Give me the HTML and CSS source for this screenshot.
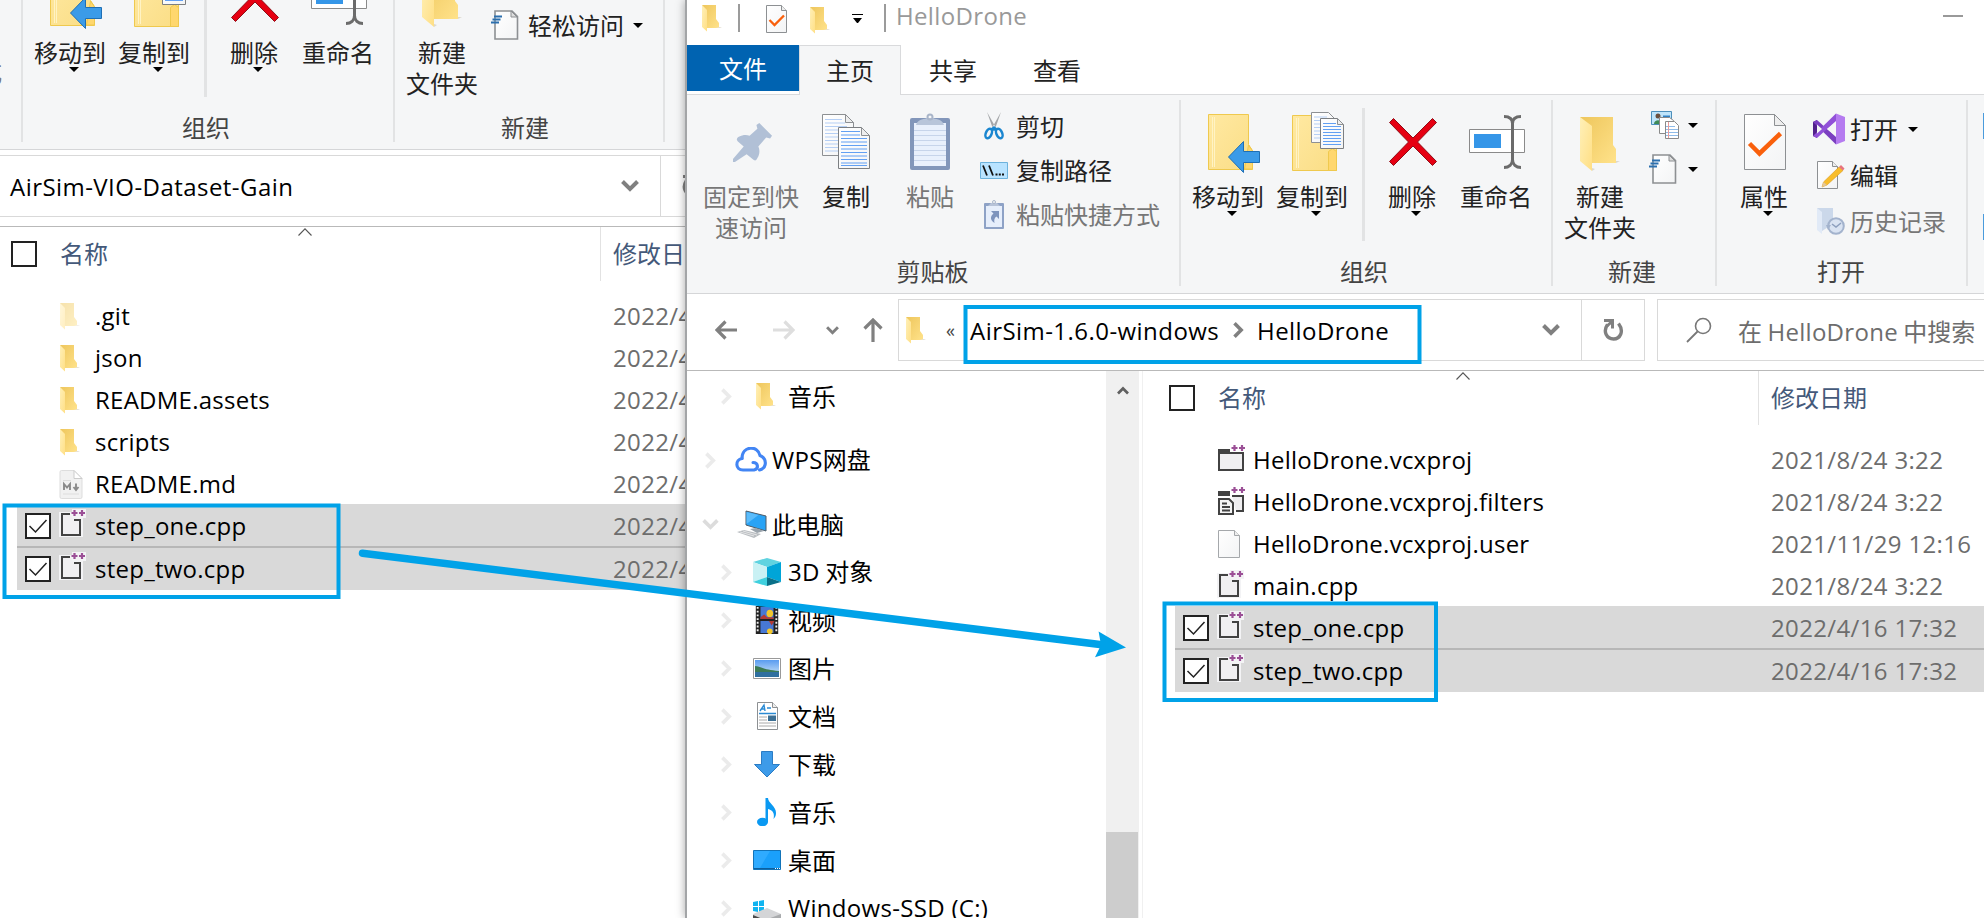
FILE: index.html
```html
<!DOCTYPE html>
<html lang="zh-CN">
<head>
<meta charset="utf-8">
<title>HelloDrone</title>
<link rel="stylesheet" href="styles.css">
</head>
<body>
<svg class="defs" width="0" height="0">
  <defs>
    <linearGradient id="gFold" x1="0" x2="1" y1="0" y2="1"><stop offset="0" stop-color="#eec65c"/><stop offset="1" stop-color="#ffe28a"/></linearGradient>
    <linearGradient id="gFlap" x1="0" x2="1" y1="0" y2="1"><stop offset="0" stop-color="#fff0b8"/><stop offset="1" stop-color="#ffdf85"/></linearGradient>
    <linearGradient id="gBook" x1="0" x2="1" y1="0" y2="1"><stop offset="0" stop-color="#ffe9a2"/><stop offset="1" stop-color="#fadd85"/></linearGradient>
    <linearGradient id="gPage" x1="0" x2="1" y1="0" y2="1"><stop offset="0" stop-color="#fff"/><stop offset="1" stop-color="#f3f4f5"/></linearGradient>
    <linearGradient id="gSky" x1="0" x2="0" y1="0" y2="1"><stop offset="0" stop-color="#5a9cf0"/><stop offset="1" stop-color="#d8ecf8"/></linearGradient>
    <symbol id="folder" viewBox="0 0 20 28"><path d="M0 1h14v14l3 4v5H5z" fill="url(#gFold)"/><path d="M0 1l5 5v21.500L0 23z" fill="url(#gFlap)"/><path d="M14 24h4l2-1h-3z" fill="#e6e1d5"/></symbol>
    <symbol id="folderBig" viewBox="0 0 40 56"><path d="M0 1h33v28l3 4v14H10z" fill="url(#gFold)"/><path d="M0 1l12 9v45L0 45z" fill="url(#gFlap)"/><path d="M36 47l4-2-4 0zM12 55l3-2-3-1z" fill="#dcd8ce"/></symbol>
    <symbol id="pin" viewBox="0 0 42 42"><path d="M28 1l13 13-2 3-4-1-8 9c2 4 1 9-1 12-1 3-3 3-5 1l-6-5L3 41H1v-3l11-13-6-5c-2-2-1-4 1-5 4-2 8-2 11-1l8-7-1-4z" fill="#b1c0d6"/></symbol>
    <symbol id="copy" viewBox="0 0 48 56"><path d="M.5.500h23l8 8v33H.500z" fill="url(#gPage)" stroke="#8d9093"/><path d="M3 5.500h17M3 9h20M3 12.500h22M3 16h13M3 19.500h13M3 23h13M3 26.500h13M3 30h13M3 33.500h13M3 37h13" stroke="#b5cff5"/><path d="M23.500.5v8h8z" fill="#eee" stroke="#8d9093"/><path d="M16.500 13.500h23l8 8v33h-31z" fill="url(#gPage)" stroke="#7c7f82"/><path d="M39.500 13.500v8h8z" fill="#eee" stroke="#8d9093"/><path d="M19 17.500h19M19 21h19M19 24.500h26M19 28h26M19 31.500h26M19 35h26M19 38.500h26M19 42h26M19 45.500h26M19 49h26M19 51.500h26" stroke="#62a0f3" stroke-width="1.200"/></symbol>
    <symbol id="paste" viewBox="0 0 40 58"><rect y="5" width="40" height="52" rx="2" fill="#8296ba"/><path d="M4 10h32v43H4z" fill="#e9f0fc"/><path d="M4 17.500h32M4 22.500h32M4 27.500h32M4 32.500h32M4 37.500h32M4 42.500h32M4 47.500h32" stroke="#c7d4ea"/><path d="M6 12c2-6 6-5 11-7h6c5 2 9 1 11 7z" fill="#b8c5da"/><circle cx="20" cy="4" r="2.500" fill="none" stroke="#a9b5c9" stroke-width="2"/></symbol>
    <symbol id="cut" viewBox="0 0 20 28"><path d="M3 0l9 16-3 1zM17 0L8 16l3 1z" fill="#a4a6a9"/><g fill="none" stroke="#1a86d0" stroke-width="2.500"><ellipse cx="4.700" cy="21.500" rx="2.900" ry="5" transform="rotate(22 4.700 21.500)"/><ellipse cx="15.300" cy="21.500" rx="2.900" ry="5" transform="rotate(-22 15.300 21.500)"/></g><path d="M6 17l4-3 4 3-4 2z" fill="#1a86d0"/></symbol>
    <symbol id="path" viewBox="0 0 28 17"><path d="M.5.500h27v16H.500z" fill="#b9e3ff" stroke="#6db2dc"/><path d="M3 3.500l4 10M9 3.500l4 10" stroke="#111" stroke-width="1.800"/><path d="M15.500 12.500h2M18.800 12.500h2M22 12.500h2" stroke="#111" stroke-width="2"/></symbol>
    <symbol id="pasteLink" viewBox="0 0 20 29"><rect y="3" width="20" height="26" rx="1" fill="#8ea2c6"/><path d="M2 6h16v21H2z" fill="#e6eefb"/><path d="M4 6l3-3h6l3 3z" fill="#b7c3d8"/><circle cx="10" cy="2" r="1.500" fill="none" stroke="#a9b5c9"/><path d="M7 11h8v8l-2.500-2.500c-2.500 1.500-2.500 4-2 6.500-5-3-4-7-1-9.500z" fill="#7e94bd"/></symbol>
    <symbol id="moveTo" viewBox="0 0 54 60"><path d="M2.500 1.500h40v30l4 6v19h-44z" fill="url(#gBook)" stroke="#efc94e"/><path d="M6.500 4v50M8.500 4v50" stroke="#fff3c4"/><path d="M42.500 32l4 6v18h-8z" fill="#ffd76e" stroke="#efc94e"/><path d="M22.500 44L37.500 28.500v10h16v11h-16v10z" fill="#3b9be8" stroke="#1f6fb4"/></symbol>
    <symbol id="copyTo" viewBox="0 0 54 60"><path d="M2.500 4.500h36v30h8v25h-44z" fill="url(#gBook)" stroke="#efc94e"/><path d="M6.500 7v50M8.500 7v50" stroke="#fff3c4"/><path d="M38.500 59.500v-19l4-3 4 3v19z" fill="#ffd76e" stroke="#efc94e"/><path d="M21.500 1.500h17l6 6v24h-23z" fill="url(#gPage)" stroke="#8d9093"/><path d="M24 6h13M24 9.500h6M24 13h6M24 16.500h6M24 20h6M24 23.500h6M24 27h6" stroke="#b5cff5"/><path d="M30.500 7.500h17l6 6v24h-23z" fill="url(#gPage)" stroke="#7c7f82"/><path d="M47.500 7.500v6h6z" fill="#eee" stroke="#8d9093"/><path d="M33 12.500h13M33 15.500h18M33 18.500h18M33 21.500h18M33 24.500h18M33 27.500h18M33 30.500h18M33 33.500h18" stroke="#62a0f3"/></symbol>
    <symbol id="delete" viewBox="0 0 48 48"><path d="M.5 4.500l4-4L24 20 43.500.500l4 4L28.500 24l19 19.500-4 4L24 28 4.500 47.500l-4-4L19.500 24z" fill="#e60012" stroke="#8f0f18"/></symbol>
    <symbol id="rename" viewBox="0 0 56 54"><path d="M.5 14.500h55v23H.500z" fill="#fff" stroke="#8a8a8a"/><path d="M5 19h27v14H5z" fill="#3596e8"/><path d="M35 1.500c5 0 8.500 2 8.500 7v36c0 5-3.500 8-8.500 8M52 1.500c-5 0-8.500 2-8.500 7v36c0 5 3.500 8 8.500 8" fill="none" stroke="#6b6b6b" stroke-width="3"/></symbol>
    <symbol id="newItem" viewBox="0 0 28 28"><path d="M.5.500h20v13H.500z" fill="#bfe4fa" stroke="#4c8fbb"/><circle cx="7" cy="5" r="2.500" fill="#6b4f3d"/><path d="M3 13c0-5 8-5 8 0z" fill="#3f8b57"/><path d="M12 5.500h7" stroke="#2f81c4" stroke-width="2"/><path d="M8.500 6.500h10l4 3v13h-14z" fill="#fff" stroke="#8a8a8a"/><path d="M14.500 10.500h9l4 4v13h-13z" fill="#fff" stroke="#8a8a8a"/><path d="M15 15.500h9M15 18.500h12M15 21.500h12M15 24.500h12" stroke="#8fbbe8"/><path d="M17.500 11v16" stroke="#e99a9a"/></symbol>
    <symbol id="easy" viewBox="0 0 28 30"><path d="M4 1h17l5.500 5.500V29H4z" fill="url(#gPage)" stroke="#8d9093" stroke-width="1.600"/><path d="M20 1v6h6z" fill="#ddd" stroke="#8d9093"/><path d="M3 6.500h8M1.500 9.500h8M0 12.500h8" stroke="#2b6fae" stroke-width="2"/></symbol>
    <symbol id="props" viewBox="0 0 42 56"><path d="M.5.500h30l11 11v44H.500z" fill="url(#gPage)" stroke="#8d9093"/><path d="M30.500.5v11h11z" fill="#eee" stroke="#8d9093"/><path d="M5.500 29.500l10 10L36.500 19.500" fill="none" stroke="#f9600c" stroke-width="4.500"/></symbol>
    <symbol id="propsSm" viewBox="0 0 21 28"><path d="M.5.500h15l5 5v22H.500z" fill="url(#gPage)" stroke="#8d9093"/><path d="M15.500.5v5h5" fill="#eee" stroke="#8d9093"/><path d="M3.500 15l5 5 9.500-9.500" fill="none" stroke="#f9600c" stroke-width="2.300"/></symbol>
    <symbol id="vs" viewBox="0 0 32 32"><path d="M0 9l4-2v18l-4-2z" fill="#52218b"/><path d="M4 7l19 17v7.500L0 9z" fill="#7b3fc0"/><path d="M4 25l19-17V.500L0 23z" fill="#9150d8"/><path d="M23 .5L32 4v24l-9 3.500z" fill="#b57bf0"/><path d="M4 11.500v9l5-4.500zM23 9v14l-9-7z" fill="#f5f6f7"/></symbol>
    <symbol id="edit" viewBox="0 0 28 28"><path d="M.5.500h15l5 5v22H.500z" fill="url(#gPage)" stroke="#8d9093"/><path d="M15.500.5v5h5" fill="#eee" stroke="#8d9093"/><path d="M5 26l1.500-5L22 6l4 3.500L10 24z" fill="#f8bd2b" stroke="#d99a1e" stroke-width=".6"/><path d="M22 6l2-2 3.500 3.500L26 9.500z" fill="#e8747e"/><path d="M5 26l1.500-5L10 24z" fill="#e3c79c"/></symbol>
    <symbol id="history" viewBox="0 0 28 28"><path d="M0 1h16v16l-11 7z" fill="#cbd8ea"/><path d="M0 1l5 4v22L0 23z" fill="#e1eaf7"/><circle cx="19" cy="19" r="7.800" fill="#d9e3f2" stroke="#a3b3cd" stroke-width="2"/><path d="M15 17l4 3 5-4" fill="none" stroke="#8d9fbe" stroke-width="1.500"/><path d="M9 18l5 0-3 5z" fill="#a3b3cd"/></symbol>
    <symbol id="back" viewBox="0 0 22 20"><path d="M10.500 1.500L2 10l8.500 8.500M2 10h20" fill="none" stroke="currentColor" stroke-width="3.200"/></symbol>
    <symbol id="up" viewBox="0 0 20 24"><path d="M1.500 10.500L10 2l8.500 8.500M10 2v22" fill="none" stroke="currentColor" stroke-width="3.200"/></symbol>
    <symbol id="down" viewBox="0 0 18 12"><path d="M1.500 1.500L9 9l7.500-7.500" fill="none" stroke="currentColor" stroke-width="4"/></symbol>
    <symbol id="right" viewBox="0 0 12 18"><path d="M1.500 1.500L9 9l-7.500 7.500" fill="none" stroke="currentColor" stroke-width="4"/></symbol>
    <symbol id="refresh" viewBox="0 0 22 22"><path d="M4.500 5.500C-.5 13 4 20 10.500 20S21.500 12.500 15.500 4.500" fill="none" stroke="#808080" stroke-width="3.400"/><path d="M1 1.500h8.500v8M9 2.500L4 7" fill="none" stroke="#808080" stroke-width="3"/></symbol>
    <symbol id="search" viewBox="0 0 26 26"><circle cx="17" cy="9" r="7.500" fill="none" stroke="#777" stroke-width="1.600"/><path d="M11.500 14.500L1 25" stroke="#777" stroke-width="1.800"/></symbol>
    <symbol id="sort" viewBox="0 0 14 8"><path d="M.5 7.500L7 .8l6.500 6.700" fill="none" stroke="#555" stroke-width="1.100"/></symbol>
    <symbol id="check" viewBox="0 0 26 26"><path d="M1 1h24v24H1z" fill="#fff" stroke="#222" stroke-width="2"/><path d="M4.500 13l6 6L21.500 7" fill="none" stroke="#222" stroke-width="1.500"/></symbol>
    <symbol id="cpp" viewBox="0 0 28 30"><path d="M0 3h13V0h14v9h-3v19H0z" fill="#f3f3f5"/><path d="M11 5H3v21h18V11h-6" fill="#f0eff1" stroke="#424242" stroke-width="2"/><path d="M12.500 4h6M15.500 1v6M20 4h6M23 1v6" stroke="#9b4f96" stroke-width="2.200"/></symbol>
    <symbol id="proj" viewBox="0 0 28 28"><path d="M2 8h24v17H2z" fill="#f0eff1" stroke="#424242" stroke-width="2"/><path d="M1 4h12v5H1z" fill="#424242"/><path d="M14.500 3h6M17.500 0v6M22 3h6M25 0v6" stroke="#9b4f96" stroke-width="2.200"/></symbol>
    <symbol id="filters" viewBox="0 0 28 28"><path d="M1 4h12v5H1z" fill="#424242"/><path d="M15 9h11v15h-7" fill="#f0eff1" stroke="#424242" stroke-width="2"/><path d="M2 12h10l4 4v11H2z" fill="#f5f5f5" stroke="#424242" stroke-width="2"/><path d="M5 16.500h5M5 20h8M5 23.500h8" stroke="#424242" stroke-width="2"/><path d="M14.500 3h6M17.500 0v6M22 3h6M25 0v6" stroke="#9b4f96" stroke-width="2.200"/></symbol>
    <symbol id="blank" viewBox="0 0 22 28"><path d="M.5.500h16l5 5v22H.500z" fill="url(#gPage)" stroke="#a5a8ab"/><path d="M16.500.5v5h5" fill="#eee" stroke="#a5a8ab"/></symbol>
    <symbol id="md" viewBox="0 0 24 29"><path d="M1 2q0-1.500 1.500-1.500H15l8 8V27q0 1.500-1.500 1.500h-19Q1 28.500 1 27z" fill="#f1f1f1" stroke="#ddd"/><path d="M15 .5v8h8z" fill="#fff" stroke="#ccc"/><path d="M5 20v-6l3 3.500 3-3.500v6M17 13.500v6M14.500 17l2.500 3 2.500-3" fill="none" stroke="#8a8a8a" stroke-width="1.900"/><path d="M4 24h16M4 10.500h8" stroke="#ddd"/></symbol>
    <symbol id="wps" viewBox="0 0 32 26"><g fill="none" stroke="#4285f4" stroke-width="3.100" stroke-linecap="round"><path d="M7 11.500C7-1.500 23-2 25 8.500c7 3 7.500 12-.5 14.500"/><path d="M7 11.500c-7 1-7 11.500 1 11.500h11c5-1 4.500-7.500-1-7.500"/></g></symbol>
    <symbol id="pc" viewBox="0 0 31 28"><path d="M10 1l20 5v15L10 15z" fill="#29a3f5" stroke="#4f5b66"/><path d="M10.500 2l12 3-12 9z" fill="#5bbcfb"/><path d="M14 19l6-1 8 3-7 2z" fill="#9aa3ab"/><path d="M1 22l7-2 17 4-7 4z" fill="#b9bdc1"/><path d="M4 22l14 4M7 21l14 4" stroke="#eee" stroke-width=".8"/></symbol>
    <symbol id="cube" viewBox="0 0 28 28"><path d="M0 4l14-4 14 4-14 5z" fill="#5fd3e0"/><path d="M0 4l14 5v10L0 24z" fill="#c9f1f4"/><path d="M28 4l-14 5v10l14 5z" fill="#00a5d8"/><path d="M14 19l14 5-14 4z" fill="#0a7088"/><path d="M0 24l14-5v9z" fill="#3fd0de"/></symbol>
    <symbol id="video" viewBox="0 0 24 30"><path d="M0 0h24v30H0z" fill="#222"/><path d="M5 1h14v13H5zM5 16h14v13H5z" fill="#4778d4"/><path d="M2 1v28M22 1v28" stroke="#eee" stroke-width="2" stroke-dasharray="2 2"/><ellipse cx="15" cy="8" rx="3.500" ry="4" fill="#f3c72c"/><path d="M5 12l4-3 3 3h7v2H5z" fill="#b33a34"/><path d="M14 16h6l-3 5z" fill="#b33a34"/><circle cx="15" cy="27" r="3" fill="#f3c72c"/><path d="M4 15h16" stroke="#222" stroke-width="1.500"/></symbol>
    <symbol id="pic" viewBox="0 0 28 21"><path d="M.5.500h27v20H.500z" fill="#fff" stroke="#999"/><path d="M2 2h24v17H2z" fill="url(#gSky)"/><path d="M2 8c5 0 8 4 24 5v2H2z" fill="#3c7a55"/><path d="M2 14h24v5H2z" fill="#2f6f9f"/></symbol>
    <symbol id="doc" viewBox="0 0 21 28"><path d="M.5.500h15l5 5v22H.500z" fill="#fff" stroke="#8d9093"/><path d="M15.500.5v5h5" fill="#eee" stroke="#8d9093"/><path d="M3 9l4-6 1 6M4.500 7h3M10 6h4M2 11.500h17" fill="none" stroke="#2a8ad4" stroke-width="1.400"/><path d="M2 15h8M2 18h8M2 21h17M2 24h17" stroke="#aaa"/><path d="M11 13.500h8V19h-8z" fill="#3c6f94"/></symbol>
    <symbol id="dl" viewBox="0 0 26 27"><path d="M7.500.500h11v13h7L13 26 .500 13.500h7z" fill="#3d9be9" stroke="#2b7cc4"/></symbol>
    <symbol id="music" viewBox="0 0 20 28"><ellipse cx="5.500" cy="24" rx="5.500" ry="4.200" fill="#0a99f2"/><path d="M8.500 0H11c0 5 8 8 8 15 0 3-1 4-2.500 6 1.500-6-1-9-5.500-10v13H8.500z" fill="#0a99f2"/></symbol>
    <symbol id="desk" viewBox="0 0 28 20"><path d="M.5.500h27v19H.500z" fill="#1aa0fb" stroke="#1273b8"/><path d="M1 1h16L7 18H1z" fill="#2fabff"/><path d="M1 18.500h26" stroke="#0c5f9e"/><path d="M22 18.500h5" stroke="#fff" stroke-dasharray="1 1"/></symbol>
    <symbol id="ssd" viewBox="0 0 28 28"><path d="M0 2l5-1v5H0zM6 1l5-1v6H6zM0 7h5v5l-5-1zM6 7h5v6l-5-1z" fill="#10b4f0"/><path d="M0 14l14-6 14 6v6L12 26 0 20z" fill="#d4d5d7"/><path d="M0 15l12 5v7L0 21z" fill="#4a4a4a"/><path d="M12 20l16-6v7l-16 6z" fill="#a9abad"/></symbol>
  </defs>
</svg>

<main class="desktop">
  <section class="window source">
    <div class="ribbon">
      <div class="group tail"><div class="row dim">式</div></div>
      <div class="group organize">
        <div class="tools">
          <div class="big"><div class="pic"><svg class="i-move"><use href="#moveTo"/></svg></div><span>移动到</span><i class="tri"></i></div>
          <div class="big"><div class="pic"><svg class="i-copyto"><use href="#copyTo"/></svg></div><span>复制到</span><i class="tri"></i></div>
          <div class="split"></div>
          <div class="big"><div class="pic"><svg class="i-del"><use href="#delete"/></svg></div><span>删除</span><i class="tri"></i></div>
          <div class="big"><div class="pic"><svg class="i-ren"><use href="#rename"/></svg></div><span>重命名</span></div>
        </div>
        <div class="caption">组织</div>
      </div>
      <div class="group create wide">
        <div class="tools">
          <div class="big"><div class="pic"><svg class="i-fold"><use href="#folderBig"/></svg></div><span>新建</span><span>文件夹</span></div>
          <div class="stack new second"><div class="row"><svg class="i-easy"><use href="#easy"/></svg><span>轻松访问</span><i class="tri"></i></div></div>
        </div>
        <div class="caption">新建</div>
      </div>
      <div class="group rest"></div>
    </div>
    <div class="address">
      <div class="box crumbs"><span class="latin path-name">AirSim-VIO-Dataset-Gain</span><svg class="i-drop"><use href="#down"/></svg></div>
      <div class="box reload"><svg class="i-refresh"><use href="#refresh"/></svg></div>
    </div>
    <div class="files">
      <div class="head"><svg class="i-sort"><use href="#sort"/></svg><span class="tick"></span><span class="h-name">名称</span><span class="h-date">修改日期</span></div>
      <ul class="list">
        <li><span class="ic"><svg class="i-folder faded"><use href="#folder"/></svg></span><span class="name">.git</span><span class="date">2022/4/16</span></li>
        <li><span class="ic"><svg class="i-folder"><use href="#folder"/></svg></span><span class="name">json</span><span class="date">2022/4/16</span></li>
        <li><span class="ic"><svg class="i-folder"><use href="#folder"/></svg></span><span class="name">README.assets</span><span class="date">2022/4/16</span></li>
        <li><span class="ic"><svg class="i-folder"><use href="#folder"/></svg></span><span class="name">scripts</span><span class="date">2022/4/16</span></li>
        <li><span class="ic"><svg class="i-md"><use href="#md"/></svg></span><span class="name">README.md</span><span class="date">2022/4/16</span></li>
        <li class="on first"><svg class="i-check"><use href="#check"/></svg><span class="ic"><svg class="i-cpp"><use href="#cpp"/></svg></span><span class="name">step_one.cpp</span><span class="date">2022/4/16</span></li>
        <li class="on"><svg class="i-check"><use href="#check"/></svg><span class="ic"><svg class="i-cpp"><use href="#cpp"/></svg></span><span class="name">step_two.cpp</span><span class="date">2022/4/16</span></li>
      </ul>
    </div>
  </section>

  <section class="window target">
    <header class="title">
      <svg class="i-tfold"><use href="#folder"/></svg><i class="bar"></i>
      <svg class="i-tprop"><use href="#propsSm"/></svg><svg class="i-tfold2"><use href="#folder"/></svg>
      <i class="quick"></i><i class="bar bar2"></i><span class="latin">HelloDrone</span><i class="min"></i>
    </header>
    <nav class="tabs"><span class="tab file">文件</span><span class="tab current">主页</span><span class="tab">共享</span><span class="tab">查看</span></nav>
    <div class="ribbon">
      <div class="group clip">
        <div class="tools">
          <div class="big pinned dim"><div class="pic"><svg class="i-pin"><use href="#pin"/></svg></div><span>固定到快</span><span>速访问</span></div>
          <div class="big"><div class="pic"><svg class="i-copy"><use href="#copy"/></svg></div><span>复制</span></div>
          <div class="big dim"><div class="pic"><svg class="i-paste"><use href="#paste"/></svg></div><span>粘贴</span></div>
          <div class="stack">
            <div class="row"><b><svg class="i-cut"><use href="#cut"/></svg></b><span>剪切</span></div>
            <div class="row"><b><svg class="i-path"><use href="#path"/></svg></b><span>复制路径</span></div>
            <div class="row dim"><b><svg class="i-plink"><use href="#pasteLink"/></svg></b><span>粘贴快捷方式</span></div>
          </div>
        </div>
        <div class="caption">剪贴板</div>
      </div>
      <div class="group organize">
        <div class="tools">
          <div class="big"><div class="pic"><svg class="i-move"><use href="#moveTo"/></svg></div><span>移动到</span><i class="tri"></i></div>
          <div class="big"><div class="pic"><svg class="i-copyto"><use href="#copyTo"/></svg></div><span>复制到</span><i class="tri"></i></div>
          <div class="split"></div>
          <div class="big"><div class="pic"><svg class="i-del"><use href="#delete"/></svg></div><span>删除</span><i class="tri"></i></div>
          <div class="big"><div class="pic"><svg class="i-ren"><use href="#rename"/></svg></div><span>重命名</span></div>
        </div>
        <div class="caption">组织</div>
      </div>
      <div class="group create">
        <div class="tools">
          <div class="big"><div class="pic"><svg class="i-fold"><use href="#folderBig"/></svg></div><span>新建</span><span>文件夹</span></div>
          <div class="stack new">
            <div class="row"><svg class="i-item"><use href="#newItem"/></svg><i class="tri"></i></div>
            <div class="row"><svg class="i-easy"><use href="#easy"/></svg><i class="tri"></i></div>
          </div>
        </div>
        <div class="caption">新建</div>
      </div>
      <div class="group open">
        <div class="tools">
          <div class="big"><div class="pic"><svg class="i-props"><use href="#props"/></svg></div><span>属性</span><i class="tri"></i></div>
          <div class="stack tall">
            <div class="row"><b><svg class="i-vs"><use href="#vs"/></svg></b><span>打开</span><i class="tri"></i></div>
            <div class="row"><b><svg class="i-edit"><use href="#edit"/></svg></b><span>编辑</span></div>
            <div class="row dim"><b><svg class="i-edit"><use href="#history"/></svg></b><span>历史记录</span></div>
          </div>
        </div>
        <div class="caption">打开</div>
      </div>
      <div class="group select"><i></i><i></i></div>
    </div>
    <div class="address">
      <div class="moves">
        <svg class="i-back"><use href="#back"/></svg><svg class="i-fwd"><use href="#back"/></svg><svg class="i-recent"><use href="#down"/></svg><svg class="i-up"><use href="#up"/></svg>
      </div>
      <div class="box crumbs"><svg class="i-afold"><use href="#folder"/></svg><span class="latin more">«</span><span class="latin c1">AirSim-1.6.0-windows</span><svg class="i-next"><use href="#right"/></svg><span class="latin">HelloDrone</span><svg class="i-drop"><use href="#down"/></svg></div>
      <div class="box reload"><svg class="i-refresh"><use href="#refresh"/></svg></div>
      <div class="box find"><svg class="i-search"><use href="#search"/></svg><span>在 <em>HelloDrone</em> 中搜索</span></div>
    </div>
    <div class="body">
      <aside class="tree">
        <div class="node"><svg class="i-tw"><use href="#right"/></svg><b><svg class="i-nfold"><use href="#folder"/></svg></b><span>音乐</span></div>
        <div class="node top"><svg class="i-tw"><use href="#right"/></svg><b><svg class="i-wps"><use href="#wps"/></svg></b><span><em>WPS</em>网盘</span></div>
        <div class="node top openn"><svg class="i-twd"><use href="#down"/></svg><b><svg class="i-pc"><use href="#pc"/></svg></b><span>此电脑</span></div>
        <div class="node"><svg class="i-tw"><use href="#right"/></svg><b><svg class="i-cube"><use href="#cube"/></svg></b><span><em>3D</em> 对象</span></div>
        <div class="node"><svg class="i-tw"><use href="#right"/></svg><b><svg class="i-video"><use href="#video"/></svg></b><span>视频</span></div>
        <div class="node"><svg class="i-tw"><use href="#right"/></svg><b><svg class="i-pic"><use href="#pic"/></svg></b><span>图片</span></div>
        <div class="node"><svg class="i-tw"><use href="#right"/></svg><b><svg class="i-doc"><use href="#doc"/></svg></b><span>文档</span></div>
        <div class="node"><svg class="i-tw"><use href="#right"/></svg><b><svg class="i-dl"><use href="#dl"/></svg></b><span>下载</span></div>
        <div class="node"><svg class="i-tw"><use href="#right"/></svg><b><svg class="i-music"><use href="#music"/></svg></b><span>音乐</span></div>
        <div class="node"><svg class="i-tw"><use href="#right"/></svg><b><svg class="i-desk"><use href="#desk"/></svg></b><span>桌面</span></div>
        <div class="node"><svg class="i-tw"><use href="#right"/></svg><b><svg class="i-ssd"><use href="#ssd"/></svg></b><span><em>Windows-SSD (C:)</em></span></div>
      </aside>
      <div class="scroll"><svg class="i-sup"><use href="#down"/></svg><i class="thumb"></i></div>
      <div class="files">
        <div class="head"><svg class="i-sort"><use href="#sort"/></svg><span class="tick"></span><span class="h-name">名称</span><span class="h-date">修改日期</span></div>
        <ul class="list">
          <li><span class="ic"><svg class="i-proj"><use href="#proj"/></svg></span><span class="name">HelloDrone.vcxproj</span><span class="date">2021/8/24 3:22</span></li>
          <li><span class="ic"><svg class="i-proj"><use href="#filters"/></svg></span><span class="name">HelloDrone.vcxproj.filters</span><span class="date">2021/8/24 3:22</span></li>
          <li><span class="ic"><svg class="i-blank"><use href="#blank"/></svg></span><span class="name">HelloDrone.vcxproj.user</span><span class="date">2021/11/29 12:16</span></li>
          <li><span class="ic"><svg class="i-cpp"><use href="#cpp"/></svg></span><span class="name">main.cpp</span><span class="date">2021/8/24 3:22</span></li>
          <li class="on first"><svg class="i-check"><use href="#check"/></svg><span class="ic"><svg class="i-cpp"><use href="#cpp"/></svg></span><span class="name">step_one.cpp</span><span class="date">2022/4/16 17:32</span></li>
          <li class="on"><svg class="i-check"><use href="#check"/></svg><span class="ic"><svg class="i-cpp"><use href="#cpp"/></svg></span><span class="name">step_two.cpp</span><span class="date">2022/4/16 17:32</span></li>
        </ul>
      </div>
    </div>
  </section>

  <svg class="marks" viewBox="0 0 1984 918">
    <g fill="none" stroke="#00a2e8" stroke-width="4">
      <rect x="4.500" y="505.500" width="334" height="91.500"/>
      <rect x="965.500" y="307" width="454" height="55"/>
      <rect x="1164.500" y="603.500" width="271.500" height="96.500"/>
      <path d="M362.500 553.200L1104 645" stroke-width="7.500" stroke-linecap="round"/>
    </g>
    <path d="M1126 647.500L1098.600 631.500L1101 645L1095 657.200z" fill="#00a2e8"/>
  </svg>
</main>
</body>
</html>
```
FILE: styles.css
```css
* { box-sizing: border-box; }
body { margin: 0; background: #fff; font: 24px/31px "Noto Sans CJK SC", sans-serif; color: #222; }
ul { margin: 0; padding: 0; list-style: none; }
em { font: 24px/29px "Open Sans", sans-serif; letter-spacing: .3px; }
svg { display: block; flex: none; overflow: visible; }
span { white-space: nowrap; flex: none; }
i { display: block; flex: none; }
b { display: flex; justify-content: center; align-items: center; flex: none; font-weight: 400; }
.defs { position: absolute; }
.latin, .name, .date { font-family: "Open Sans", sans-serif; font-size: 24px; letter-spacing: .35px; }

.desktop { position: relative; width: 1984px; height: 918px; overflow: hidden; }
.window { position: absolute; top: 0; height: 918px; background: #fff; overflow: hidden; }
.source { left: 0; width: 687px; }
.target { left: 685px; width: 1320px; border-left: 2px solid #a3a5a7; box-shadow: 0 0 9px rgba(0, 0, 0, .35); }
.marks { position: absolute; inset: 0; width: 1984px; height: 918px; pointer-events: none; }

/* title bar and tabs */
.title { display: flex; height: 45px; padding: 4px 0 0 15px; align-items: flex-start; color: #999; }
.title .latin { margin: -4px 0 0 10px; }
.bar { width: 2px; height: 28px; margin-left: 16px; background: #9b9b9b; }
.bar2 { margin-left: 21px; }
.i-tfold { width: 20px; height: 28px; }
.i-tprop { width: 21px; height: 28px; margin: 1px 0 0 26px; }
.i-tfold2 { width: 20px; height: 28px; margin: 2px 0 0 23px; }
.quick { width: 11px; height: 10px; margin: 10px 0 0 22px; border-top: 1.500px solid #000; }
.quick::after { content: ""; display: block; margin: 3px 1px 0; border: 4.500px solid transparent; border-top: 5px solid #000; border-bottom: 0; }
.min { width: 20px; height: 2px; margin: 11px 42px 0 auto; background: #999; }
.tabs { display: flex; height: 50px; border-bottom: 1px solid #d9dadc; }
.tab { width: 104px; text-align: center; padding-top: 9px; }
.file { width: 112px; height: 46px; padding-top: 7px; background: #0063b1; color: #fff; }
.current { width: 102px; height: 50px; background: #f5f6f7; border: 1px solid #d9dadc; border-bottom: 0; padding-top: 8px; }

/* ribbon */
.ribbon { display: flex; height: 199px; background: #f5f6f7; border-bottom: 1px solid #d5d6d8; }
.source .ribbon { margin-top: -49px; }
.group { position: relative; display: flex; flex-direction: column; flex: none; }
.group::after { content: ""; position: absolute; right: 0; top: 5px; width: 2px; height: 186px; background: #e2e3e4; }
.clip { width: 494px; }
.organize { width: 372px; }
.create { width: 164px; }
.create.wide { width: 270px; }
.open { width: 251px; }
.tail { width: 23px; align-items: flex-end; padding: 97px 21px 0 0; }
.rest::after, .select::after { display: none; }
.rest { width: 22px; }
.select { width: 40px; padding: 18px 0 0 15px; gap: 75px; }
.select i { width: 20px; height: 26px; background: #4a9bdc; }
.tools { display: flex; height: 160px; padding-left: 5px; }
.clip .tools { padding-left: 16px; }
.tools span { line-height: 29px; padding-bottom: 2px; }
.caption { height: 32px; padding-right: 6px; text-align: center; color: #444; }
.wide .caption { padding-right: 10px; }
.open .caption, .clip .caption { padding-right: 3px; }
.big { display: flex; flex-direction: column; align-items: center; width: 84px; padding-top: 13px; }
.pinned { width: 96px; margin-right: 5px; }
.pic { display: flex; height: 73px; align-items: flex-start; justify-content: center; }
.dim { color: #777; }
.tri { border: 5px solid transparent; border-top: 5px solid #000; border-bottom: 0; }
.big .tri { margin: -1px 0 0 8px; }
.split { width: 3px; height: 133px; margin: 13px 5px 0 8px; background: #e2e3e4; }
.stack { margin-left: 7px; padding-top: 9px; }
.row { display: flex; height: 44px; align-items: center; gap: 7px; }
.row b { width: 30px; }
.stack.tall { padding-top: 11px; }
.tall .row { height: 46px; gap: 5px; }
.tall .row b { width: 32px; }
.tall .tri { margin-left: 5px; }
.stack.new { padding-top: 8px; }
.stack.second { padding-top: 52px; }
.new .row { gap: 9px; }
.second .i-easy { margin-right: 0; }
.i-pin { width: 41px; height: 41px; margin: 14px 0 0 2px; }
.i-copy { width: 48px; height: 56px; margin-top: 6px; }
.i-paste { width: 40px; height: 58px; margin-top: 5px; }
.i-cut { width: 20px; height: 28px; }
.i-path { width: 28px; height: 17px; }
.i-plink { width: 20px; height: 29px; }
.i-move { width: 54px; height: 60px; margin: 5px 0 0 9px; }
.i-copyto { width: 54px; height: 60px; margin: 3px 0 0 9px; }
.i-del { width: 48px; height: 48px; margin: 10px 0 0 2px; }
.i-ren { width: 56px; height: 54px; margin: 7px 0 0 2px; }
.i-fold { width: 40px; height: 56px; margin-top: 8px; }
.i-props { width: 42px; height: 56px; margin: 6px 0 0 2px; }
.i-item { width: 28px; height: 28px; margin-left: 2px; }
.i-easy { width: 28px; height: 30px; margin-right: 2px; }
.i-vs { width: 32px; height: 32px; }
.i-edit { width: 28px; height: 28px; margin-left: 4px; }

/* address row */
.address { display: flex; height: 77px; padding-top: 5px; border-bottom: 1px solid #b9b9b9; }
.box { display: flex; flex: none; align-items: center; height: 62px; border: 1px solid #d9d9d9; color: #000; }
.address .latin { letter-spacing: .45px; }
.source .crumbs { width: 661px; padding-left: 10px; border-left: 0; }
.source .i-drop { margin-left: auto; margin-right: 21px; }
.crumbs .i-drop { width: 18px; height: 12px; color: #808080; }
.reload { width: 63px; border-left: 0; padding-left: 21px; }
.i-refresh { width: 22px; height: 22px; }
.moves { display: flex; flex: none; align-items: center; width: 211px; height: 62px; padding-left: 28px; color: #808080; }
.i-back, .i-fwd { width: 22px; height: 20px; }
.i-fwd { transform: scaleX(-1); margin-left: 36px; color: #dedede; }
.i-recent { width: 13px; height: 9px; margin-left: 31px; }
.i-up { width: 20px; height: 24px; margin-left: 24px; }
.target .crumbs { width: 684px; }
.i-afold { width: 20px; height: 28px; margin-left: 7px; }
.more { width: 24px; margin-left: 20px; font-size: 18px; color: #444; }
.c1 { width: 262px; }
.i-next { width: 11px; height: 16px; color: #808080; margin: 0 13px 0 1px; }
.target .i-drop { margin-left: auto; margin-right: 21px; }
.find { width: 360px; margin-left: 12px; padding-left: 28px; color: #6d6d6d; }
.i-search { width: 26px; height: 26px; margin-right: 26px; }

/* navigation tree */
.body { display: flex; }
.tree { width: 419px; padding-top: 1px; color: #000; }
.node { display: flex; align-items: center; height: 48px; padding-left: 34px; }
.node span { line-height: 29px; padding-bottom: 2px; }
.node b { width: 32px; margin: 0 5px 0 19px; }
.top { margin-top: 16px; padding-left: 18px; }
.openn { padding-left: 15px; }
.i-tw { width: 11px; height: 17px; color: #ebebeb; }
.i-twd { width: 17px; height: 11px; color: #dcdcdc; margin-right: -3px; }
.i-nfold { width: 20px; height: 28px; margin-right: 2px; }
.i-wps { width: 32px; height: 26px; }
.i-pc { width: 31px; height: 28px; }
.i-cube { width: 28px; height: 28px; }
.i-video { width: 24px; height: 28px; }
.i-pic { width: 28px; height: 21px; }
.i-doc { width: 21px; height: 28px; }
.i-dl { width: 26px; height: 27px; }
.i-music { width: 20px; height: 28px; }
.i-desk { width: 28px; height: 20px; }
.i-ssd { width: 28px; height: 28px; margin-top: 12px; }
.scroll { width: 33px; height: 560px; background: #f0f0f0; }
.i-sup { width: 12px; height: 9px; margin: 15px 0 0 11px; transform: scaleY(-1); color: #606060; }
.thumb { width: 32px; height: 100px; margin-top: 437px; background: #cdcdcd; }

/* file list */
.files { flex: 1; }
.target .files { margin-left: 3px; padding-left: 15px; border-left: 1px solid #f0f0f0; }
.head { position: relative; display: flex; height: 68px; color: #44597a; }
.tick { width: 26px; height: 26px; margin: 14px 0 0 11px; border: 2px solid #222; }
.h-name { width: 541px; height: 54px; margin-left: 23px; padding-top: 10px; border-right: 1px solid #e2e2e2; }
.h-date { padding: 10px 0 0 12px; }
.i-sort { position: absolute; left: 298px; top: 1px; width: 14px; height: 8px; }
.list li { display: flex; align-items: center; height: 42px; margin-left: 17px; padding-left: 42px; }
.list .on { background: #d9d9d9; padding-left: 8px; box-shadow: 0 1px #d9d9d9; }
.list .first { box-shadow: 0 -1px #d9d9d9; border-bottom: 1px solid #b7b7b7; }
.list .first + .on { border-top: 1px solid #b7b7b7; }
.i-check { width: 26px; height: 26px; margin-right: 8px; }
.ic { width: 36px; height: 30px; display: flex; align-items: center; }
.name { width: 518px; color: #000; letter-spacing: .25px; }
.date { color: #6d6d6d; }
.list li:not(.on) .name, .list li:not(.on) .date { line-height: 29px; padding-bottom: 2px; }
.i-folder { width: 20px; height: 28px; margin-left: 1px; }
.faded { opacity: .5; }
.i-md { width: 24px; height: 29px; }
.i-cpp { width: 28px; height: 30px; margin-top: -3px; }
.i-proj { width: 28px; height: 28px; margin-top: -3px; }
.i-blank { width: 22px; height: 28px; margin-left: 1px; }
```
